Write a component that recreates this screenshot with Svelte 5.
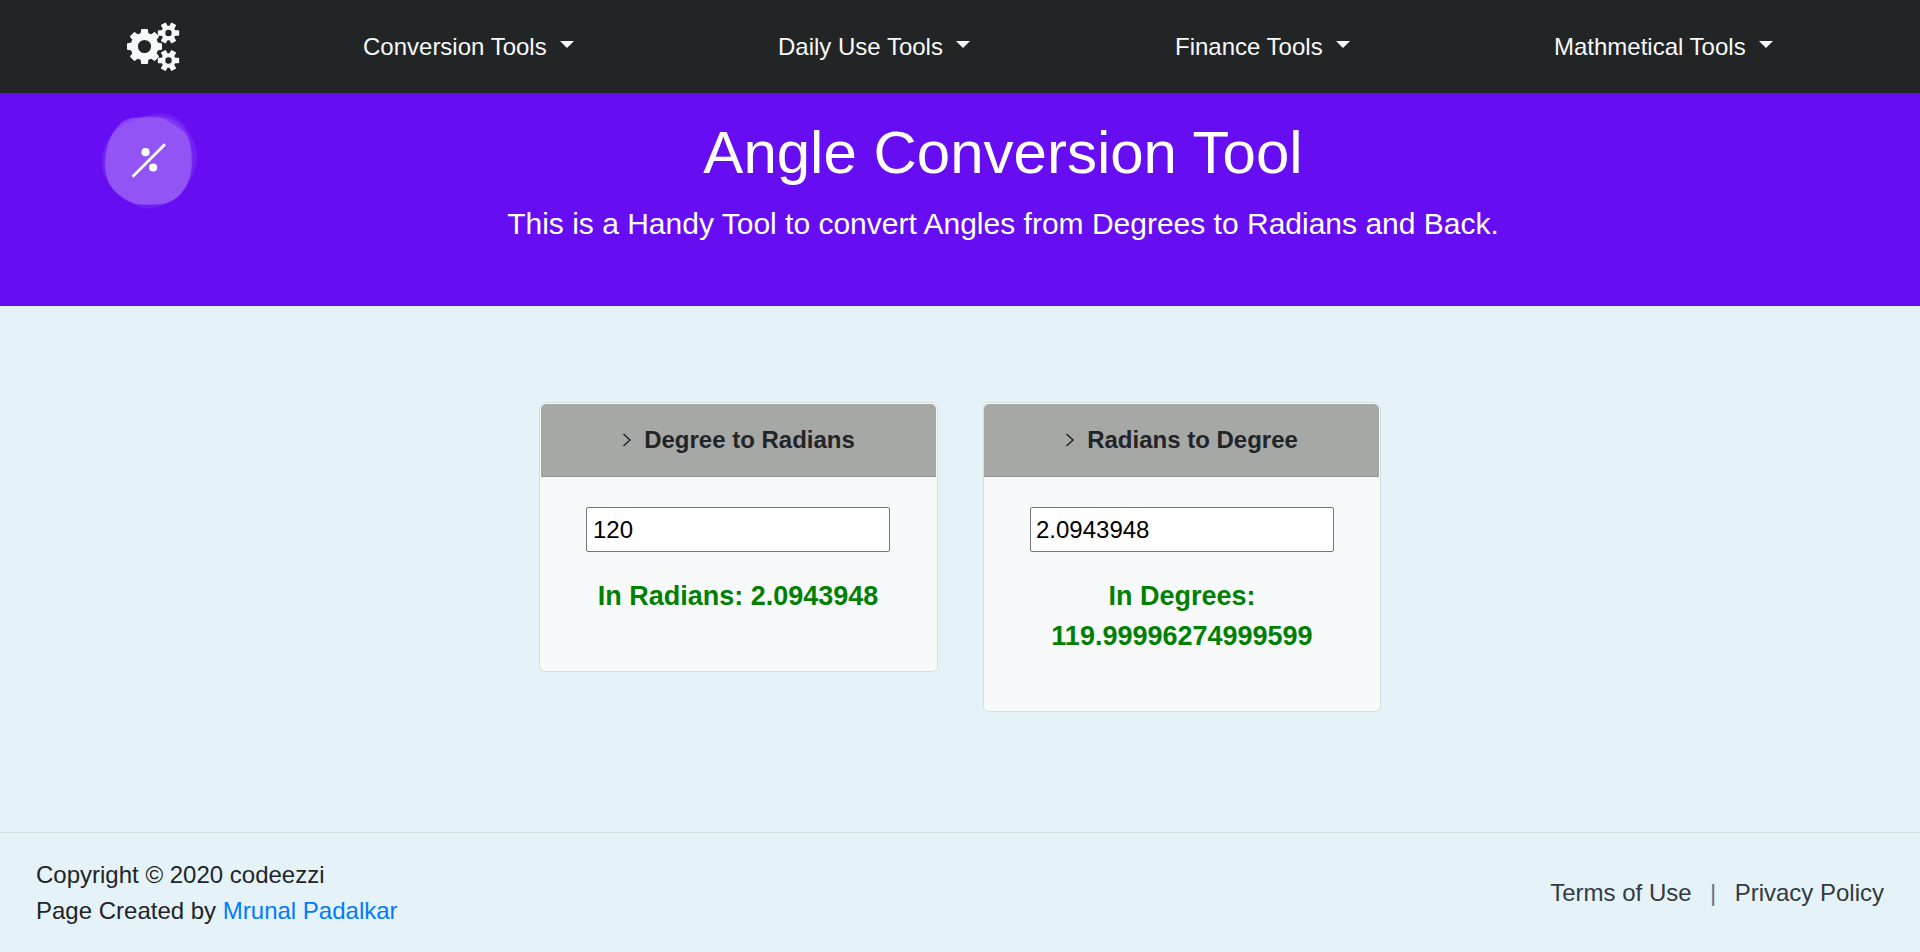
<script>
  let degrees = $state('120');
  let radians = $state('2.0943948');
  const menus = ['Conversion Tools', 'Daily Use Tools', 'Finance Tools', 'Mathmetical Tools'];

  // Outline of a gear with evenly spaced square teeth.
  function gear(cx, cy, outer, inner, teeth, hole, turn = 0) {
    const step = (Math.PI * 2) / teeth;
    const pt = (r, a) => `${(cx + r * Math.sin(a)).toFixed(2)} ${(cy - r * Math.cos(a)).toFixed(2)}`;
    const corners = [];
    for (let i = 0; i < teeth; i++) {
      const a = (i + turn) * step;
      corners.push(pt(inner, a - step * 0.31), pt(outer, a - step * 0.2), pt(outer, a + step * 0.2), pt(inner, a + step * 0.31));
    }
    return `M${corners.join('L')}ZM${cx - hole} ${cy}a${hole} ${hole} 0 1 0 ${hole * 2} 0a${hole} ${hole} 0 1 0 ${-hole * 2} 0Z`;
  }
  const gears = [
    gear(17.5, 24.5, 17, 13.3, 8, 7.3),
    gear(41.5, 11, 10.2, 6.6, 6, 3.9, 0.5),
    gear(41.5, 38.5, 10.2, 6.6, 6, 3.9, 0.5)
  ];
</script>

<div class="page">
  <nav>
    <a class="brand" href="#home" aria-label="Home">
      <svg width="54" height="49" viewBox="0 0 54 49">
        {#each gears as d}
          <path {d} fill="#f8f9fa" stroke="#f8f9fa" stroke-width="1.4" stroke-linejoin="round" fill-rule="evenodd" />
        {/each}
      </svg>
    </a>
    {#each menus as name, i}
      <a class="menu m{i}" href="#menu">{name}<span class="caret"></span></a>
    {/each}
  </nav>

  <header>
    <svg class="badge" width="97" height="97" viewBox="0 0 97 97">
      <g fill="#fff">
        <path opacity=".08" d="M40 5C52 0 64 -1 72 3C82 8 89 18 93 29C97 40 97 50 92 61C87 73 81 84 70 88C61 92 53 97 43 95C34 93 26 86 17 80C7 72 1 62 1 49C1 36 7 23 18 15C25 10 32 8 40 5Z" />
        <path opacity=".09" d="M33 5C46 2 63 2 73 7C83 12 89 23 91 37C93 51 90 66 82 78C77 87 67 90 57 91C45 93 34 91 26 87C14 82 6 71 4 57C2 43 6 28 13 18C18 11 25 7 33 5Z" />
        <path opacity=".16" d="M34 4.500H57C63 5 69 9 75 13C80 16 85 20 87 25C91 36 92 52 89 63C86 74 80 82 71 88C67 91 61 91.500 53 91.500H35C26 89 17 83 11 75C5 67 3 55 5 43C6 32 10 21 17 13C22 7 27 5 34 4.500Z" />
      </g>
      <circle cx="44.500" cy="39.200" r="4.100" fill="#fff" />
      <circle cx="52.100" cy="54.500" r="4.100" fill="#fff" />
      <path d="M31.500 63.800L64 31.300" stroke="#fff" stroke-width="2.800" />
    </svg>
    <div class="intro">
      <h1>Angle Conversion Tool</h1>
      <p>This is a Handy Tool to convert Angles from Degrees to Radians and Back.</p>
    </div>
  </header>

  <main>
    <section class="card">
      <h2>
        <svg width="11" height="16" viewBox="0 0 11 16"><path d="M1.500 2L8 8L1.500 14" /></svg>
        <span>Degree to Radians</span>
      </h2>
      <div class="body">
        <input bind:value={degrees} aria-label="Degrees" />
        <p>In Radians: 2.0943948</p>
      </div>
    </section>
    <section class="card second">
      <h2>
        <svg width="11" height="16" viewBox="0 0 11 16"><path d="M1.500 2L8 8L1.500 14" /></svg>
        <span>Radians to Degree</span>
      </h2>
      <div class="body">
        <input class="tight" bind:value={radians} aria-label="Radians" />
        <p>In Degrees: 119.99996274999599</p>
      </div>
    </section>
  </main>

  <footer>
    <div>
      <div>Copyright © 2020 codeezzi</div>
      <div>Page Created by <a class="author" href="#author">Mrunal Padalkar</a></div>
    </div>
    <div class="links"><a href="#terms">Terms of Use</a><span>|</span><a href="#privacy">Privacy Policy</a></div>
  </footer>
</div>

<style>
  :global(body) { margin: 0; background: #e5f3f8; }
  * { box-sizing: border-box; }
  a { text-decoration: none; color: inherit; }
  .page {
    height: 952px;
    overflow: hidden;
    display: flex;
    flex-direction: column;
    font: 24px/36px "Liberation Sans", Arial, sans-serif;
    color: #212529;
    background: #e5f3f8;
  }
  nav {
    height: 93px;
    background: #222526;
    color: #f8f9fa;
    display: flex;
    align-items: center;
  }
  .brand { margin-left: 127px; width: 54px; height: 49px; display: block; flex: none; }
  .brand svg { display: block; }
  .menu { display: flex; white-space: nowrap; flex: none; }
  .m0 { margin-left: 182px; width: 415px; }
  .m1 { width: 397px; }
  .m2 { width: 379px; }
  .caret {
    margin: 12px 0 0 13px;
    width: 0;
    height: 0;
    border: 7px solid transparent;
    border-top-color: #f8f9fa;
    border-bottom: 0;
  }
  header {
    height: 213px;
    background: #660ef1;
    color: #fff;
    display: flex;
  }
  .badge { margin: 20px 0 0 101px; flex: none; }
  .intro { width: 1610px; text-align: center; }
  h1 { margin: 24px 0 0; font-weight: 400; font-size: 60px; line-height: 72px; }
  .intro p { margin: 12px 0 0; font-size: 30px; line-height: 45px; }
  main { flex: 1; display: flex; align-items: flex-start; gap: 45px; padding: 96px 0 0 539px; }
  .card {
    width: 399px;
    border: 1px solid #d8dcde;
    border-radius: 6px;
    background: #f8f9fb;
    padding: 1px 1px 0;
  }
  .second { width: 398px; padding-left: 0; }
  h2 {
    margin: 0;
    height: 73px;
    border-bottom: 1px solid #909293;
    border-radius: 5px 5px 0 0;
    background: #a6a8a6;
    display: flex;
    justify-content: center;
    align-items: center;
    gap: 11px;
    font-size: 24px;
    line-height: 36px;
  }
  h2 svg { fill: none; stroke: #212529; stroke-width: 1.5; }
  .body { padding: 30px 46px 55px 45px; text-align: center; }
  .second .body { padding: 30px 45px 55px 46px; }
  input {
    display: block;
    width: 304px;
    height: 45px;
    border: 1px solid #767676;
    border-radius: 2px;
    padding: 1px 6px;
    background: #fff;
    color: #000;
    font: 24px "Liberation Sans", Arial, sans-serif;
    outline: 0;
  }
  input.tight { padding-left: 5px; }
  .body p { margin: 24px 0 0; color: green; font-weight: 700; font-size: 27px; line-height: 40px; }
  footer {
    height: 120px;
    border-top: 1px solid #d8dfe1;
    padding: 0 36px;
    display: flex;
    align-items: center;
    justify-content: space-between;
  }
  .author { color: #007bff; }
  .links { color: #343a40; display: flex; }
  .links span { width: 43px; text-align: center; color: #6c757d; }
</style>
